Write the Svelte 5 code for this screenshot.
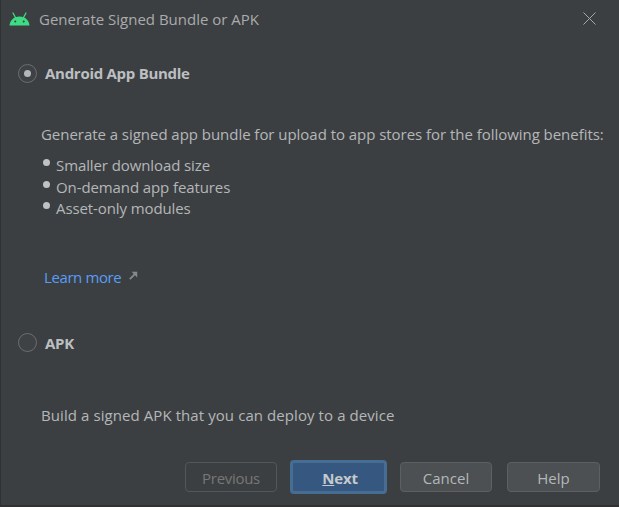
<script>
  const features = ['Smaller download size', 'On-demand app features', 'Asset-only modules'];
</script>

<div class="dialog">
  <header class="title">
    <svg class="logo" width="21" height="14" viewBox="0 0 21 14" aria-hidden="true">
      <path d="M0.5 13.5 C1 8.5 4.5 4.5 10.5 4.5 C16.5 4.5 20 8.5 20.5 13.5 Z" fill="#3ddc84"/>
      <path d="M4 1 L6.5 5.5 M17 1 L14.5 5.5" stroke="#3ddc84" stroke-width="1.3" stroke-linecap="round"/>
      <circle cx="6.3" cy="9.6" r="1" fill="#3c3f41"/>
      <circle cx="14.7" cy="9.6" r="1" fill="#3c3f41"/>
    </svg>
    <span>Generate Signed Bundle or APK</span>
    <svg class="close" width="13" height="13" viewBox="0 0 13 13" aria-hidden="true">
      <path d="M0.5 0.5 L12.5 12.5 M12.5 0.5 L0.5 12.5" stroke="#a5a7a9" stroke-width="1"/>
    </svg>
  </header>

  <section class="option first">
    <label class="radio-row">
      <span class="radio checked"></span>
      <strong>Android App Bundle</strong>
    </label>
    <p class="desc">Generate a signed app bundle for upload to app stores for the following benefits:</p>
    <ul>
      {#each features as f}
        <li>{f}</li>
      {/each}
    </ul>
    <a class="learn" href="#learn">Learn more
      <svg width="9" height="9" viewBox="0 0 9 9" aria-hidden="true">
        <path d="M0.8 8.2 L6.8 2.2" stroke="#868a8c" stroke-width="1.8"/>
        <path d="M2.6 0.8 H8.2 V6.4 Z" fill="#868a8c"/>
      </svg>
    </a>
  </section>

  <section class="option second">
    <label class="radio-row">
      <span class="radio"></span>
      <strong>APK</strong>
    </label>
    <p class="desc apk">Build a signed APK that you can deploy to a device</p>
  </section>

  <footer class="buttons">
    <button class="disabled" disabled>Previous</button>
    <button class="primary"><u>N</u>ext</button>
    <button>Cancel</button>
    <button class="help">Help</button>
  </footer>
</div>

<style>
  :global(body) {
    margin: 0;
    background: #3c3f41;
  }
  .dialog {
    box-sizing: border-box;
    width: 619px;
    height: 507px;
    background: #3c3f41;
    border-left: 1px solid #2f3133;
    border-bottom: 2px solid #2f3133;
    font-family: "Open Sans", "Noto Sans", sans-serif;
    font-size: 15px;
    color: #b4b7b9;
    display: flex;
    flex-direction: column;
  }
  .title {
    display: flex;
    align-items: center;
    height: 38px;
    padding: 0 23px 0 8px;
    color: #a9abad;
  }
  .logo { margin-right: 9px; margin-top: -1px; }
  .close { margin-left: auto; margin-top: -2px; }
  .option { padding-left: 17px; }
  .first { padding-top: 23px; }
  .radio-row {
    display: flex;
    align-items: center;
    gap: 8px;
    height: 24px;
  }
  .radio-row strong { color: #bcbfc1; font-weight: 700; letter-spacing: -0.28px; }
  .radio {
    box-sizing: border-box;
    width: 19px;
    height: 19px;
    border: 1px solid #6b6e70;
    border-radius: 50%;
    background: #3f4244;
    display: flex;
    align-items: center;
    justify-content: center;
  }
  .radio.checked::after {
    content: "";
    width: 7px;
    height: 7px;
    border-radius: 50%;
    background: #b4b7b9;
  }
  .desc { margin: 0 0 0 23px; white-space: nowrap; }
  .first .desc { margin-top: 39px; line-height: 20px; letter-spacing: -0.04px; }
  ul {
    list-style: none;
    margin: 11px 0 0 24px;
    padding: 0;
  }
  li {
    height: 21.5px;
    line-height: 21px;
    padding-left: 14px;
    position: relative;
    letter-spacing: -0.1px;
  }
  li::before {
    content: "";
    position: absolute;
    left: 1px;
    top: 4px;
    width: 7px;
    height: 7px;
    border-radius: 50%;
    background: #bfc1c3;
  }
  .learn {
    display: inline-block;
    margin: 47px 0 0 26px;
    color: #589df6;
    text-decoration: none;
    line-height: 20px;
    letter-spacing: -0.4px;
  }
  .learn svg { margin-left: 4px; vertical-align: 3px; }
  .second { padding-top: 44px; }
  .desc.apk { margin-top: 50px; line-height: 20px; letter-spacing: 0.08px; }
  .buttons {
    display: flex;
    gap: 13px;
    margin-top: auto;
    padding: 0 19px 11px 184px;
    align-items: center;
  }
  button {
    box-sizing: border-box;
    width: 92px;
    height: 30px;
    border: 1px solid #5e6060;
    border-radius: 4px;
    background: #4c5052;
    color: #b4b7b9;
    font: inherit;
    padding: 2px 0 0;
  }
  .help { width: 93px; margin-left: 2px; }
  .disabled {
    background: transparent;
    color: #777;
    border-color: #53565a;
    letter-spacing: -0.3px;
  }
  .primary {
    width: 97px;
    height: 34px;
    background: #365880;
    border: 3px solid #466d94;
    color: #c5c9cc;
    font-weight: 700;
    padding-left: 3px;
    letter-spacing: -0.2px;
  }
</style>
